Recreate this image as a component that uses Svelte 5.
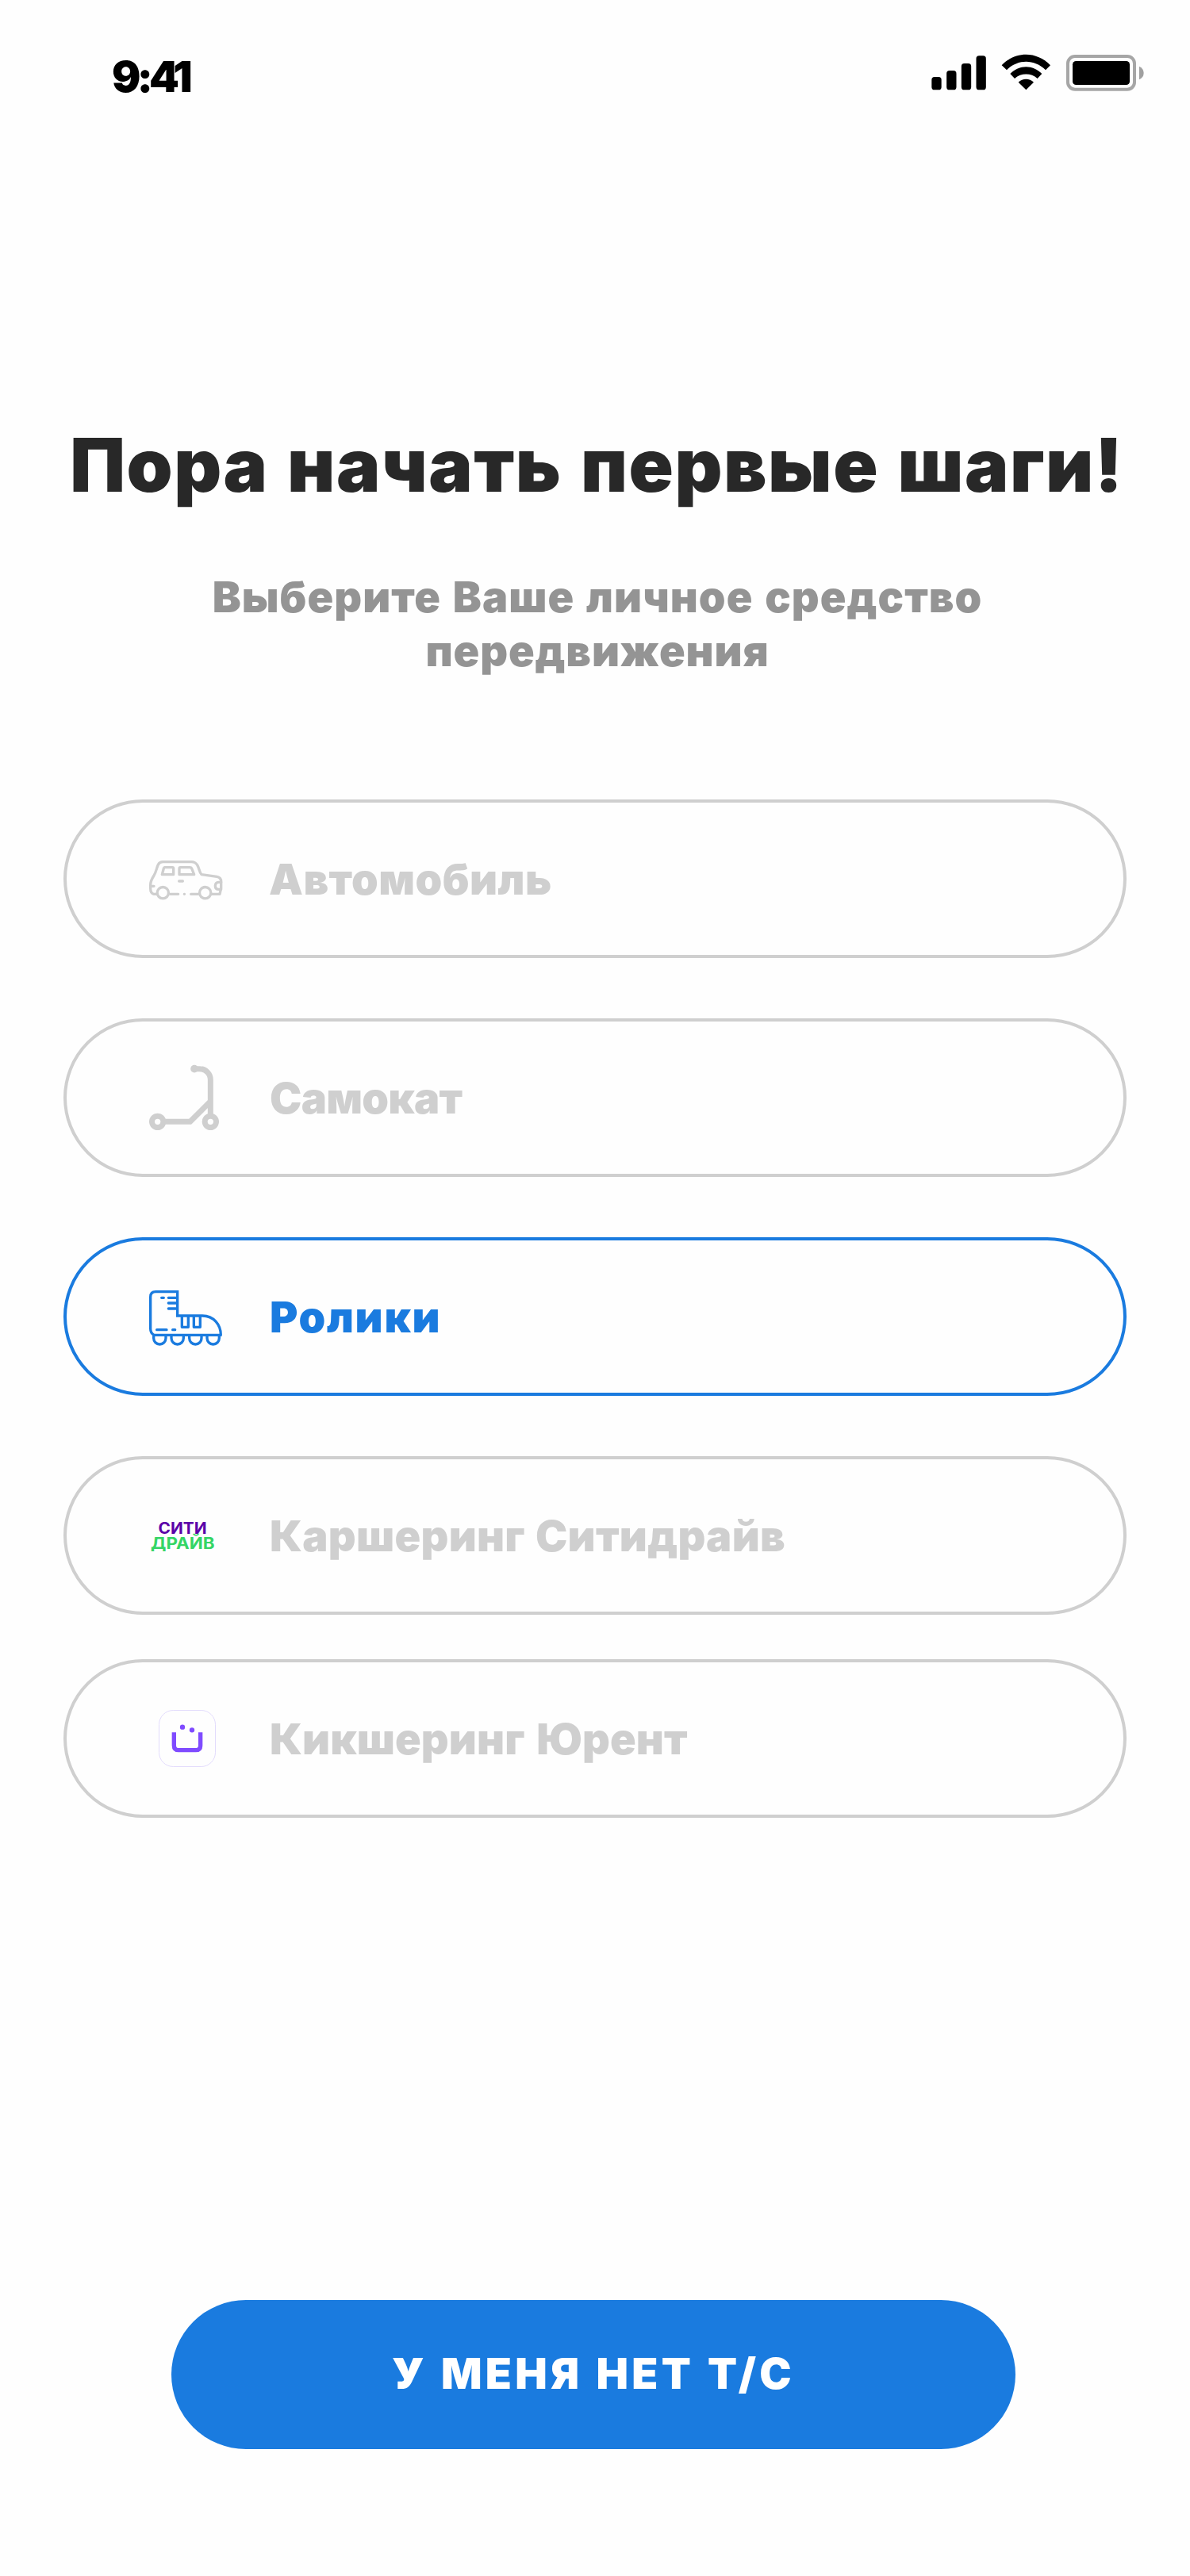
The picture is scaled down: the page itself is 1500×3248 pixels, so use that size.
<script>
  let selected = $state('skates');

  const options = [
    { id: 'car', label: 'Автомобиль' },
    { id: 'scooter', label: 'Самокат' },
    { id: 'skates', label: 'Ролики' },
    { id: 'citydrive', label: 'Каршеринг Ситидрайв' },
    { id: 'urent', label: 'Кикшеринг Юрент' }
  ];
  const wheels = [101, 168, 236, 303];
</script>

<main class="screen">
  <header class="status">
    <span class="time">9:41</span>
    <svg class="indicators" viewBox="0 0 1020 270" aria-hidden="true">
      <rect x="103" y="141" width="37" height="49" rx="11" />
      <rect x="159.500" y="117" width="37" height="73" rx="11" />
      <rect x="215.500" y="90" width="37" height="100" rx="11" />
      <rect x="271.500" y="61" width="37" height="129" rx="11" />
      <path d="M368 97C420 43 500 43 552 97L534 115C492 73 428 73 387 115Z" />
      <path d="M400 129C434 94 486 94 520 129L503 147C479 125 441 125 417 147Z" />
      <path d="M431 161C447 145 473 145 489 161L460 190Z" />
      <rect x="618" y="63" width="252" height="125" rx="27" fill="none" stroke="#a6a6a6" stroke-width="12" />
      <rect x="636" y="81" width="216" height="90" rx="13" />
      <path d="M888 101Q905 109 905 126Q905 143 888 151Z" fill="#a0a0a0" />
    </svg>
  </header>

  <section class="intro">
    <h1>Пора начать первые шаги!</h1>
    <p>Выберите Ваше личное средство <span>передвижения</span></p>
  </section>

  <div class="options">
    {#each options as option (option.id)}
      <button
        class="option {option.id}"
        class:selected={selected === option.id}
        onclick={() => (selected = option.id)}
      >
        {#if option.id === 'car'}
          <svg class="icon line" viewBox="0 -36 330 300" stroke-width="10">
            <path d="M51 172H42Q29 170 29 150V137Q29 122 42 102C52 85 52 73 58 61Q63 50 76 50H184Q198 50 206 62C214 76 214 90 222 98L280 106Q296 109 296 124V150L291 172H262" />
            <path d="M82 71H112Q116 71 116 75V98H73L79 75Q80 71 82 71ZM142 71H178Q183 71 185 75L194 98H138V75Q138 71 142 71Z" />
            <path d="M137 123H151M104 172H134M157 172H157.500M182 172H208M30 142H42" />
            <circle cx="76" cy="167" r="21.500" />
            <circle cx="236" cy="167" r="21.500" />
            <path d="M296 127H287Q274 128 274 141T287 154H296" />
          </svg>
        {:else if option.id === 'scooter'}
          <svg class="icon" viewBox="60 42 330 300" stroke-width="21">
            <circle cx="116" cy="283" r="21.500" />
            <circle cx="316" cy="283" r="21.500" />
            <path d="M143 283H239L314 208M316 257V125C316 101 298 83 274 83H255" />
            <circle class="solid" cx="255" cy="83" r="14.500" />
          </svg>
        {:else if option.id === 'skates'}
          <svg class="icon" viewBox="60 30 330 300" stroke-width="10">
            <path d="M101 249C92 244 89 238 89 226V106Q89 86 109 86H191V177H285C329 177 355 212 355 250M98 250H359" />
            {#each wheels as x}
              <path d="M{x} 253V262A23 23 0 0 0 {x + 46} 262V253" />
            {/each}
            <path d="M208 179V220H232V179M253 179V220H277V179" stroke-linejoin="round" />
            <path d="M157 109H189M131 109H139M157 129H189M157 150H189M113 230H150M173 230H182" stroke-linecap="round" />
          </svg>
        {:else if option.id === 'citydrive'}
          <svg class="icon logo" viewBox="180 1886 110 100">
            <text x="199.500" y="1934.300" textLength="61" lengthAdjust="spacingAndGlyphs" fill="#5b00a8">СИТИ</text>
            <text x="190" y="1953.300" textLength="80.500" lengthAdjust="spacingAndGlyphs" fill="#34d565">ДРАЙВ</text>
          </svg>
        {:else}
          <svg class="icon urent-mark" viewBox="60 36 330 300">
            <rect x="121.500" y="79.500" width="213" height="213" rx="54" stroke="#dcd4fb" stroke-width="2.500" />
            <path d="M178 163V212Q178 230 196 230H260Q278 230 278 212V163" stroke="#7f4bff" stroke-width="16" />
            <circle cx="210" cy="143" r="9.500" fill="#7f4bff" />
            <circle cx="246" cy="154" r="9.500" fill="#7f4bff" />
          </svg>
        {/if}
        <span class="label">{option.label}</span>
      </button>
    {/each}
  </div>

  <button class="skip"><span>У МЕНЯ НЕТ Т/С</span></button>
</main>

<style>
  :global(body) {
    margin: 0;
    background: #fefefe;
  }
  .screen {
    box-sizing: border-box;
    width: 1500px;
    height: 3248px;
    display: flex;
    flex-direction: column;
    font-family: Inter, 'Liberation Sans', sans-serif;
    font-weight: 900;
    color: #282828;
    background: #fefefe;
  }
  button {
    font: inherit;
    cursor: pointer;
  }
  .status {
    display: flex;
    justify-content: space-between;
    height: 90px;
    padding: 50px 20px 0 141px;
    color: #000;
  }
  .time {
    font-size: 54px;
    line-height: 93px;
    letter-spacing: -4.8px;
  }
  .indicators {
    width: 340px;
    height: 90px;
  }
  .intro {
    padding-top: 386px;
    text-align: center;
    white-space: nowrap;
  }
  h1 {
    margin: 0;
    padding-left: 5px;
    font-size: 93px;
    font-weight: 900;
    line-height: 120px;
    letter-spacing: 1.5px;
    word-spacing: 3.5px;
  }
  p {
    margin: 73px 0 0;
    padding-left: 6px;
    font-size: 54px;
    line-height: 68px;
    letter-spacing: 1.05px;
    word-spacing: 3px;
    color: #949494;
  }
  p span {
    display: block;
    letter-spacing: 0.87px;
  }
  .options {
    display: flex;
    flex-direction: column;
    gap: 76px;
    padding: 153px 80px 0;
  }
  .option {
    box-sizing: border-box;
    display: flex;
    align-items: center;
    gap: 50px;
    height: 200px;
    padding: 0 96px;
    border: 4px solid #cfcfcf;
    border-radius: 100px;
    background: #fefefe;
    color: #cfcfcf;
  }
  .option.selected {
    border-color: #1a7bdf;
    color: #1a7bdf;
  }
  .icon {
    flex: none;
    width: 110px;
    height: 100px;
    fill: none;
    stroke: currentColor;
  }
  .line {
    stroke-linecap: round;
    stroke-linejoin: round;
  }
  .solid {
    fill: currentColor;
    stroke: none;
  }
  .logo {
    stroke: none;
    font-size: 19.5px;
    font-weight: 700;
  }
  .urent-mark circle {
    stroke: none;
  }
  .label {
    padding-top: 2px;
    font-size: 54px;
    line-height: 68px;
    white-space: nowrap;
  }
  .car .label {
    margin-left: -1px;
    letter-spacing: 0.49px;
  }
  .scooter .label {
    letter-spacing: -0.7px;
  }
  .skates .label {
    letter-spacing: 1.7px;
  }
  .citydrive .label {
    letter-spacing: 0.3px;
    word-spacing: 2px;
  }
  .urent {
    margin-top: -20px;
  }
  .urent .label {
    letter-spacing: 0.1px;
    word-spacing: 4px;
  }
  .skip {
    width: 1064px;
    height: 188px;
    margin: 608px 0 0 216px;
    padding: 0 0 3px;
    border: 0;
    border-radius: 94px;
    background: #1a7bdf;
    color: #fff;
    font-size: 54px;
    text-align: center;
    letter-spacing: 4.3px;
    word-spacing: 2px;
  }
</style>
